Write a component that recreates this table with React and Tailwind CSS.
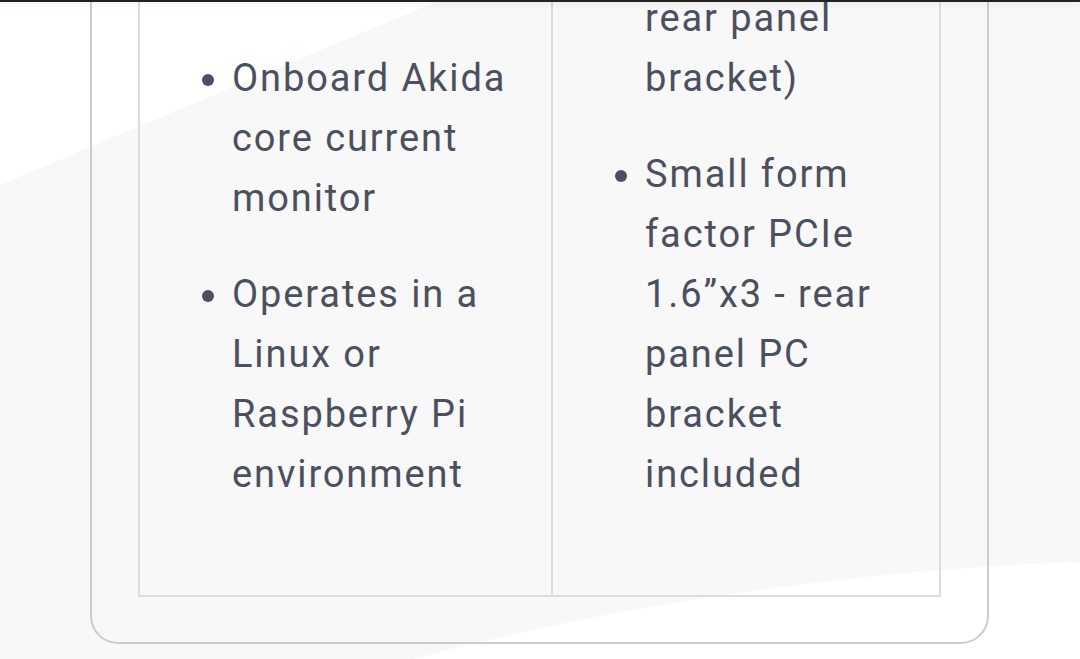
import React from "react";

const col1 = [
  "Compatible with x86 and Arm host machines",
  "Onboard Akida core current monitor",
  "Operates in a Linux or Raspberry Pi environment",
];

const col2 = [
  "PCIe x1 Gen 2 board (with compatible rear panel bracket)",
  "Small form factor PCIe 1.6\u201dx3 - rear panel PC bracket included",
];

const Cell = ({ items, width, last }) => (
  <div
    className={`flex flex-col justify-end pt-10 pb-[55px] ${
      last ? "" : "border-r-2 border-[#dddddd]"
    }`}
  >
    <ul className="list-disc pl-[92px]">
      {items.map((item, i) => (
        <li key={i} className="mb-9" style={{ width }}>
          {item}
        </li>
      ))}
    </ul>
  </div>
);

const App = () => {
  return (
    <div
      className="relative h-[659px] w-[1080px] overflow-hidden bg-white flex flex-col justify-end pb-[15px]"
      style={{ fontFamily: "Roboto, 'Noto Sans', sans-serif" }}
    >
      {/* soft grey backdrop */}
      <svg
        className="absolute inset-0"
        width="1080"
        height="659"
        viewBox="0 0 1080 659"
      >
        <path
          d="M0,185 L440,0 L1080,0 L1080,562 C900,568 650,595 413,659 L0,659 Z"
          fill="#f8f8f8"
        />
      </svg>

      <div className="absolute top-0 left-0 w-full h-[2px] bg-[#222222] shadow-[0_2px_6px_rgba(0,0,0,0.12)] z-10" />

      <div className="relative shrink-0 ml-[90px] w-[899px] border-x-2 border-b-2 border-[#cccccc] rounded-b-[28px] pl-[46px] pr-[46px] pb-[45px]">
        <div className="grid grid-cols-[413px_388px] border-x-2 border-b-2 border-[#dddddd] text-[38px] leading-[60px] tracking-[1.9px] text-[#4b5060]">
          <Cell items={col1} width={300} />
          <Cell items={col2} width={250} last />
        </div>
      </div>
    </div>
  );
};

export default App;
